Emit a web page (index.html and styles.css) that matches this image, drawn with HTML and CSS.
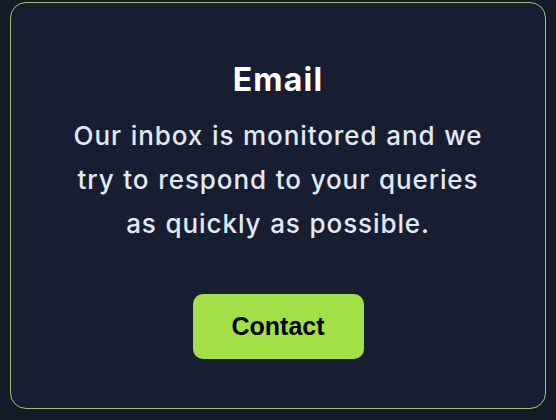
FILE: index.html
```html
<!DOCTYPE html>
<html>
<head>
<meta charset="utf-8">
<link rel="stylesheet" href="styles.css">
</head>
<body>
<div class="card">
  <h2 class="title">Email</h2>
  <p class="text">Our inbox is monitored and we try to respond to your queries as quickly as possible.</p>
  <a class="btn" href="#">Contact</a>
</div>
</body>
</html>
```
FILE: styles.css
```css
html, body {
  margin: 0;
  background: #151a29;
}
body {
  padding: 2px 10px 0 10px;
  font-family: Inter, "Noto Sans", sans-serif;
}
.card {
  box-sizing: border-box;
  width: 536px;
  height: 407px;
  border: 1.5px solid #a4c46c;
  border-radius: 16px;
  background: #181e31;
  display: flex;
  flex-direction: column;
  align-items: center;
  padding-top: 55px;
}
.title {
  margin: 0;
  font-size: 32px;
  font-weight: 700;
  letter-spacing: 1.2px;
  color: #ffffff;
  line-height: 44px;
}
.text {
  margin: 12px 0 0 0;
  width: 430px;
  text-align: center;
  font-size: 26px;
  font-weight: 500;
  letter-spacing: 0.9px;
  word-spacing: 1px;
  line-height: 44px;
  color: #e2e8f4;
}
.btn {
  margin-top: 48px;
  width: 171px;
  height: 65px;
  border-radius: 10px;
  background: #a3e048;
  color: #000;
  text-decoration: none;
  display: flex;
  align-items: center;
  justify-content: center;
  font-family: "Liberation Sans", Arial, sans-serif;
  font-weight: 700;
  font-size: 25px;
}
```
